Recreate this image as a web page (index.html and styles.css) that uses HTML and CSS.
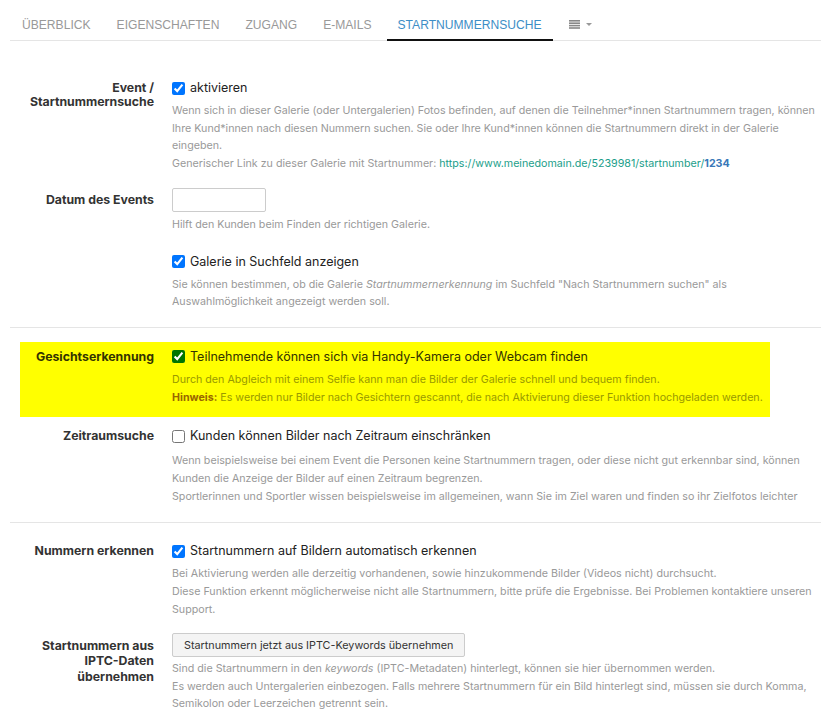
FILE: index.html
```html
<!DOCTYPE html>
<html lang="de">
<head>
    <meta charset="UTF-8">
    <title>Startnummernsuche</title>
    <link rel="stylesheet" href="styles.css">
</head>
<body>
<div class="page">
    <ul class="tabs">
        <li><a href="#">Überblick</a></li>
        <li><a href="#">Eigenschaften</a></li>
        <li><a href="#">Zugang</a></li>
        <li><a href="#">E-Mails</a></li>
        <li class="active"><a href="#">Startnummernsuche</a></li>
        <li class="more">
            <a href="#">
                <svg width="11" height="9" viewBox="0 0 11 9"><rect y="0" width="11" height="1.6" fill="#888"/><rect y="2.4" width="11" height="1.6" fill="#888"/><rect y="4.8" width="11" height="1.6" fill="#888"/><rect y="7.2" width="11" height="1.6" fill="#888"/></svg>
                <span class="caret"></span>
            </a>
        </li>
    </ul>

    <div class="form">
        <div class="row first">
            <label class="name">Event /<br>Startnummernsuche</label>
            <div class="field">
                <label class="check"><input type="checkbox" checked> aktivieren</label>
                <p class="help">Wenn sich in dieser Galerie (oder Untergalerien) Fotos befinden, auf denen die Teilnehmer*innen Startnummern tragen, können Ihre Kund*innen nach diesen Nummern suchen. Sie oder Ihre Kund*innen können die Startnummern direkt in der Galerie eingeben.<br>Generischer Link zu dieser Galerie mit Startnummer: <a class="link" href="#">https://www.meinedomain.de/5239981/startnumber/<b>1234</b></a></p>
            </div>
        </div>

        <div class="row date">
            <label class="name">Datum des Events</label>
            <div class="field">
                <input class="text" type="text">
                <p class="help">Hilft den Kunden beim Finden der richtigen Galerie.</p>
            </div>
        </div>

        <div class="row spaced">
            <div class="name"></div>
            <div class="field">
                <label class="check"><input type="checkbox" checked> Galerie in Suchfeld anzeigen</label>
                <p class="help">Sie können bestimmen, ob die Galerie <i>Startnummernerkennung</i> im Suchfeld "Nach Startnummern suchen" als Auswahlmöglichkeit angezeigt werden soll.</p>
            </div>
        </div>

        <hr>

        <div class="row marked">
            <label class="name">Gesichtserkennung</label>
            <div class="field">
                <label class="check"><input type="checkbox" checked> Teilnehmende können sich via Handy-Kamera oder Webcam finden</label>
                <p class="help">Durch den Abgleich mit einem Selfie kann man die Bilder der Galerie schnell und bequem finden.<br><b>Hinweis:</b> Es werden nur Bilder nach Gesichtern gescannt, die nach Aktivierung dieser Funktion hochgeladen werden.</p>
            </div>
        </div>

        <div class="row after-mark">
            <label class="name">Zeitraumsuche</label>
            <div class="field">
                <label class="check"><input type="checkbox"> Kunden können Bilder nach Zeitraum einschränken</label>
                <p class="help">Wenn beispielsweise bei einem Event die Personen keine Startnummern tragen, oder diese nicht gut erkennbar sind, können Kunden die Anzeige der Bilder auf einen Zeitraum begrenzen.<br>Sportlerinnen und Sportler wissen beispielsweise im allgemeinen, wann Sie im Ziel waren und finden so ihr Zielfotos leichter</p>
            </div>
        </div>

        <hr class="wide">

        <div class="row spaced">
            <label class="name">Nummern erkennen</label>
            <div class="field">
                <label class="check"><input type="checkbox" checked> Startnummern auf Bildern automatisch erkennen</label>
                <p class="help">Bei Aktivierung werden alle derzeitig vorhandenen, sowie hinzukommende Bilder (Videos nicht) durchsucht.<br>Diese Funktion erkennt möglicherweise nicht alle Startnummern, bitte prüfe die Ergebnisse. Bei Problemen kontaktiere unseren Support.</p>
            </div>
        </div>

        <div class="row iptc">
            <label class="name">Startnummern aus IPTC-Daten übernehmen</label>
            <div class="field">
                <button class="btn" type="button">Startnummern jetzt aus IPTC-Keywords übernehmen</button>
                <p class="help">Sind die Startnummern in den <i>keywords</i> (IPTC-Metadaten) hinterlegt, können sie hier übernommen werden.<br>Es werden auch Untergalerien einbezogen. Falls mehrere Startnummern für ein Bild hinterlegt sind, müssen sie durch Komma, Semikolon oder Leerzeichen getrennt sein.</p>
            </div>
        </div>
    </div>
</div>
</body>
</html>
```

FILE: styles.css
```css
*{
    margin: 0;
    padding: 0;
    box-sizing: border-box;
}
body{
    font-family: Inter, "Noto Sans", sans-serif;
    color: #333;
    background: #fff;
}
.page{
    width: 811px;
    margin-left: 10px;
}

/* tabs */
.tabs{
    list-style: none;
    display: flex;
    margin-top: 7px;
    padding-left: 1px;
    border-bottom: 1px solid #e5e5e5;
    font-family: "Liberation Sans", Arial, sans-serif;
}
.tabs li{
    margin-right: 4px;
    margin-bottom: -1px;
}
.tabs a{
    display: flex;
    align-items: center;
    height: 34px;
    padding: 3px 11px 0;
    font-size: 12.1px;
    text-transform: uppercase;
    text-decoration: none;
    color: #999;
    border-bottom: 2px solid transparent;
}
.tabs .active a{
    color: #3d8ec6;
    border-bottom-color: #111;
}
.tabs .more a{
    padding: 3px 12px 0 12px;
}
.caret{
    display: inline-block;
    margin-left: 6px;
    border-left: 3px solid transparent;
    border-right: 3px solid transparent;
    border-top: 3px solid #999;
}

/* form rows */
.row{
    display: grid;
    grid-template-columns: 162px 1fr;
}
.row .name{
    padding-right: 18px;
    text-align: right;
    font-size: 12.3px;
    font-weight: 700;
    line-height: 14px;
    padding-top: 3px;
    color: #333;
}
.row.first{
    margin-top: 37px;
}
.row.date{
    margin-top: 15px;
}
.row.date .name{
    padding-top: 5px;
}
.row.spaced{
    margin-top: 18px;
}
.row.iptc{
    margin-top: 14px;
}
.row.iptc .name{
    padding-top: 5px;
    line-height: 15.5px;
}
.row.after-mark{
    margin-top: 9px;
}
.after-mark .help{
    margin-top: 6px;
}
.check{
    display: flex;
    align-items: center;
    gap: 5px;
    font-size: 12.5px;
    line-height: 20px;
    color: #222;
}
.check input{
    width: 13px;
    height: 13px;
    margin: 0;
}
.help{
    margin-top: 4px;
    font-size: 10.7px;
    line-height: 17.7px;
    color: #999;
}
.link{
    color: #1b9e8a;
    text-decoration: none;
}
.link b{
    color: #3878b8;
}
.text{
    display: block;
    width: 94px;
    height: 24px;
    border: 1px solid #ccc;
    border-radius: 2px;
}
.btn{
    height: 24px;
    padding: 0 11px;
    font-family: Inter, "Noto Sans", sans-serif;
    font-size: 10.8px;
    color: #333;
    background: #f4f4f4;
    border: 1px solid #ccc;
    border-radius: 2px;
}
.iptc .help{
    margin-top: 3px;
}
hr{
    border: 0;
    border-top: 1px solid #e5e5e5;
    margin-top: 16px;
}
hr.wide{
    margin-top: 17px;
}
hr + .row{
    margin-top: 14px;
}

/* highlighted row */
.row.marked{
    margin-left: 10px;
    margin-right: 51px;
    padding: 5px 0 11px;
    grid-template-columns: 152px 1fr;
    background: #ffff00;
}
.marked .name,
.marked .check{
    color: #333300;
}
.marked .check input{
    accent-color: #007500;
}
.marked .help{
    color: #999900;
}
.marked .help b{
    color: #996600;
}
```
